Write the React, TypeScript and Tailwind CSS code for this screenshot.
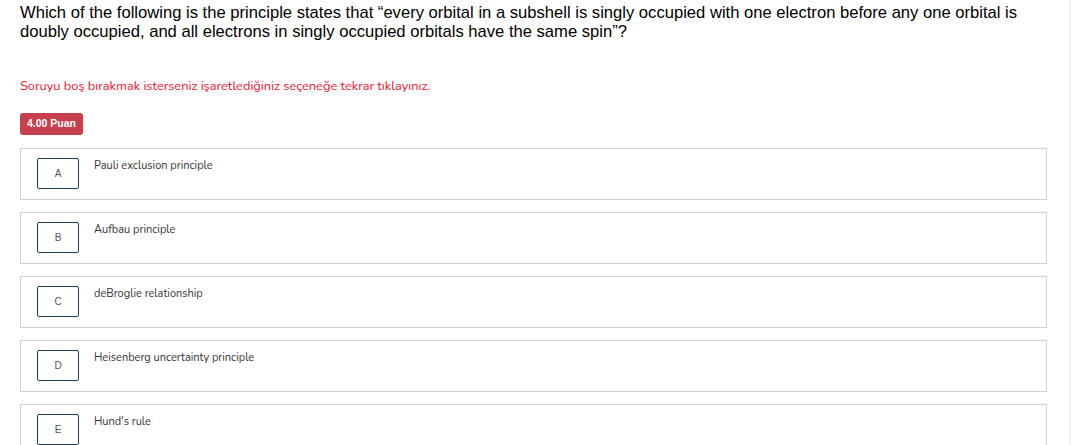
const options = [
  { key: 'A', text: 'Pauli exclusion principle' },
  { key: 'B', text: 'Aufbau principle' },
  { key: 'C', text: 'deBroglie relationship' },
  { key: 'D', text: 'Heisenberg uncertainty principle' },
  { key: 'E', text: "Hund's rule" },
];

export default function App() {
  return (
    <div className="flex h-[445px] w-full overflow-hidden bg-white">
      <div className="flex-1 pl-5 pr-[22px] pt-[3px]">
        <p className="text-[16.6px] leading-[19px] text-black font-['Liberation_Sans',Arial,sans-serif]">
          Which of the following is the principle states that “every orbital in a subshell is singly occupied with one electron before any one orbital is doubly occupied, and all electrons in singly occupied orbitals have the same spin”?
        </p>
        <p className="mt-[37px] text-[12.8px] leading-[16px] text-[#f0142f] font-['Nunito','Lato','Open_Sans',sans-serif]">
          Soruyu boş bırakmak isterseniz işaretlediğiniz seçeneğe tekrar tıklayınız.
        </p>
        <div className="mt-[19px] flex">
          <span className="flex h-[22px] items-center rounded-[3px] bg-[#c8404e] px-[7px] text-[10.5px] font-bold text-white font-['Liberation_Sans',Arial,sans-serif]">
            4.00 Puan
          </span>
        </div>
        <div className="mt-[13px] flex flex-col gap-3">
          {options.map((o) => (
            <div
              key={o.key}
              className="flex h-[52px] shrink-0 items-start border border-[#d0d0d0] pl-4 pt-[9px]"
            >
              <div className="flex h-[31px] w-[42px] shrink-0 items-center justify-center rounded-[2px] border border-[#1d3d5c] text-[10px] text-[#555] font-['Liberation_Sans',Arial,sans-serif]">
                {o.key}
              </div>
              <span className="ml-[15px] mt-[1px] text-[11px] leading-[14px] text-[#333] font-['Nunito','Lato','Open_Sans',sans-serif]">
                {o.text}
              </span>
            </div>
          ))}
        </div>
      </div>
      <div className="w-[2px] bg-[#f1f1f1]" />
    </div>
  );
}
